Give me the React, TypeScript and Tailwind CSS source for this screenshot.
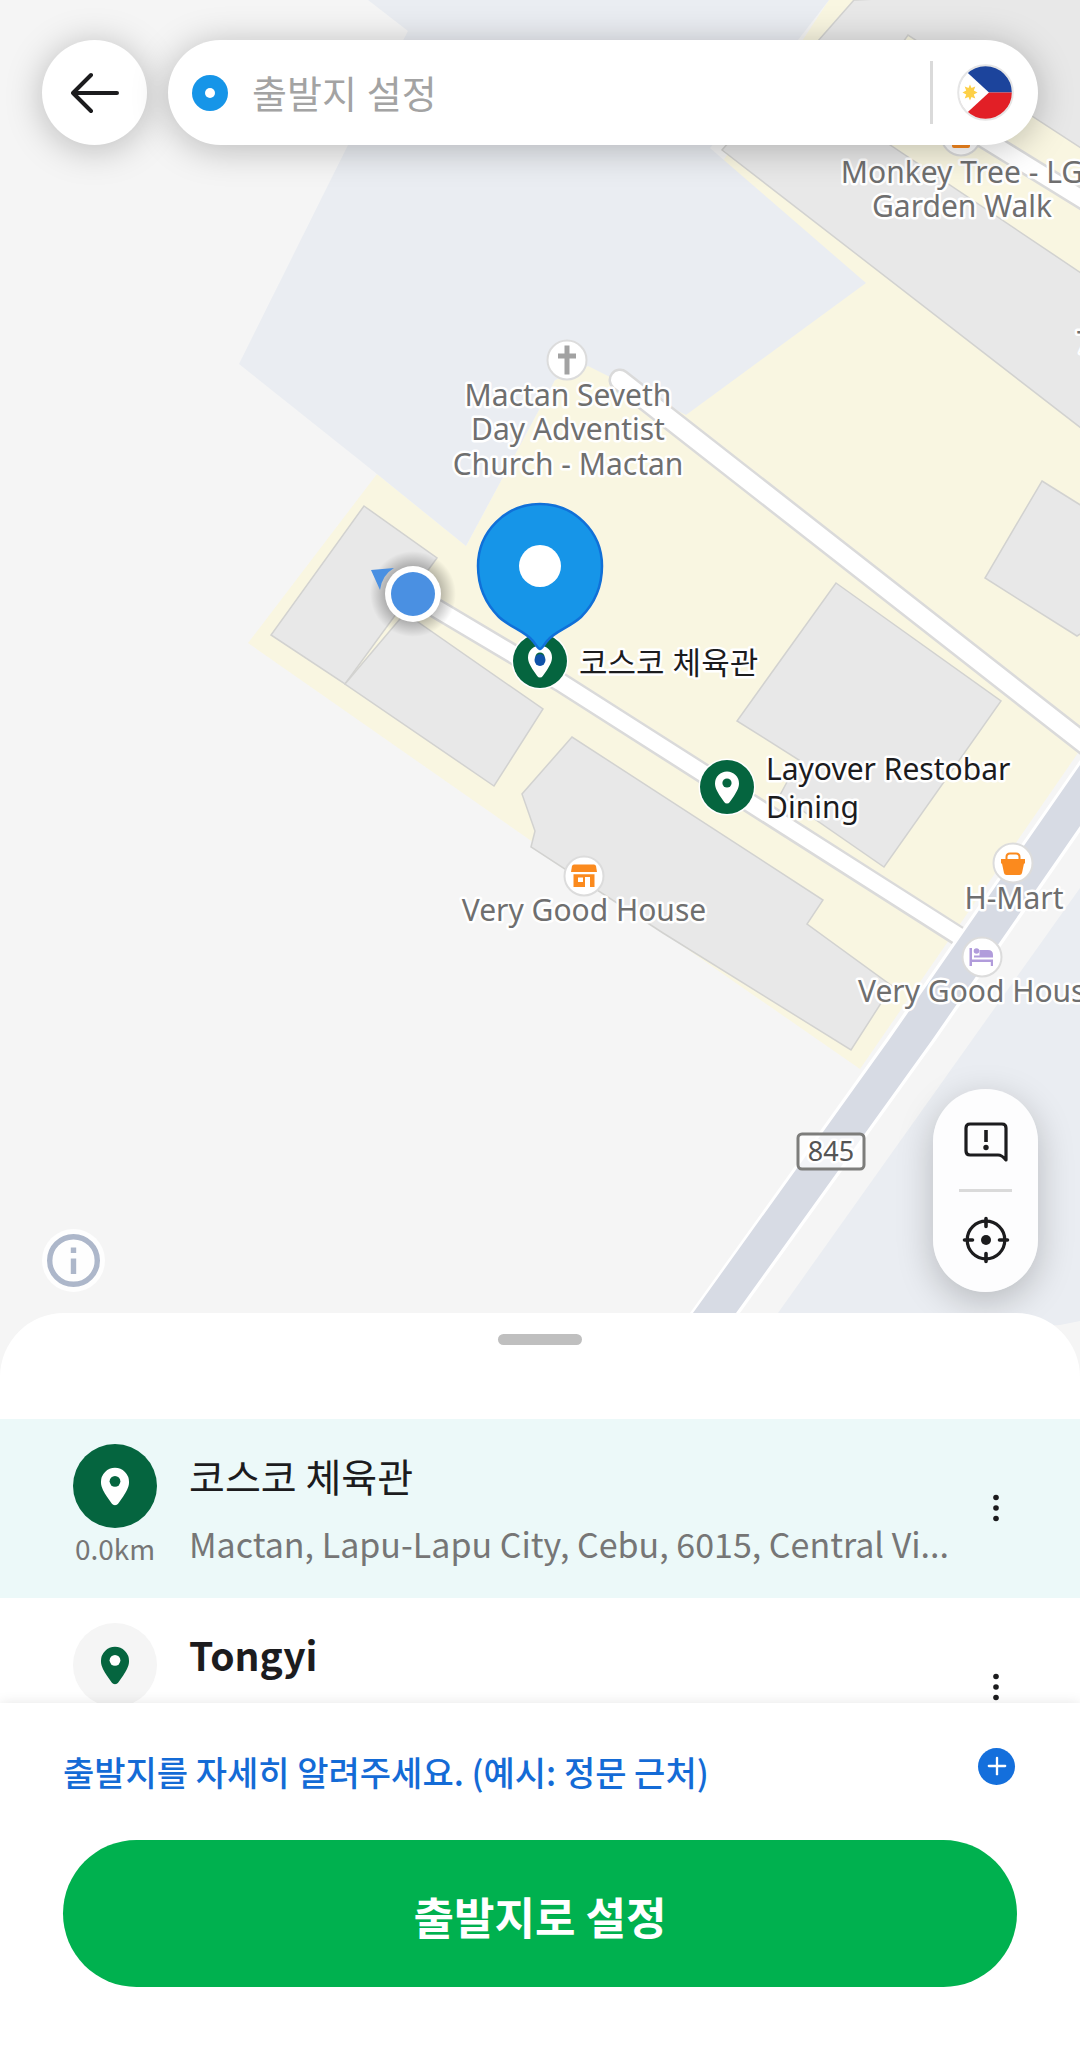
import { Plus } from "lucide-react";
import clsx from "clsx";

const places = [
  {
    name: "코스코 체육관",
    address: "Mactan, Lapu-Lapu City, Cebu, 6015, Central Vi...",
    distance: "0.0km",
    selected: true,
  },
  { name: "Tongyi", selected: false },
];

const buildings = [
  "364,506 437,558 345,684 271,635",
  "345,684 405,613 543,709 494,786",
  "572,737 522,794 535,831 531,847 663,933 851,1050 892,986 807,924 823,900",
  "836,583 1001,701 884,867 780,795 799,760 737,721",
  "1042,481 1090,511 1090,628 1077,636 985,578",
  "854,0 1090,-10 1090,154 908,35 850,118 1090,279 1090,435 722,150",
];

function PinShape({ className, hole }: { className?: string; hole: string }) {
  return (
    <g className={className}>
      <path d="M0-15.5A12 12 0 0 1 12-3.5C12 1.5 9 5.5 7 9L2.8 15A3.3 3.3 0 0 1-2.8 15L-7 9C-9 5.5-12 1.5-12-3.5A12 12 0 0 1 0-15.5Z" />
      <circle cy="-4" r="4.6" className={hole} />
    </g>
  );
}

function PoiBadge({ x, y, children }: { x: number; y: number; children: React.ReactNode }) {
  return (
    <g transform={`translate(${x} ${y})`}>
      <circle r="19.5" className="fill-white stroke-[#dcdcdc] stroke-2" />
      {children}
    </g>
  );
}

function GreenPoi({ x, y }: { x: number; y: number }) {
  return (
    <g transform={`translate(${x} ${y})`}>
      <circle r="28.5" className="fill-white" />
      <circle r="27" className="fill-[#05653f]" />
      <PinShape className="fill-white" hole="fill-[#05653f]" />
    </g>
  );
}

function MapCanvas() {
  return (
    <svg
      viewBox="0 0 1080 1377"
      preserveAspectRatio="xMidYMin slice"
      className="absolute inset-0 h-full w-full"
      role="img"
      aria-label="지도"
    >
      <defs>
        <radialGradient id="dot-shadow">
          <stop offset="0.6" stopColor="#000" stopOpacity="0.28" />
          <stop offset="1" stopColor="#000" stopOpacity="0" />
        </radialGradient>
      </defs>

      {/* land */}
      <rect width="1080" height="1377" className="fill-[#f5f5f5]" />
      <polygon
        points="829,0 1080,0 1080,750 860,1069 530,840 248,643 377,474 466,546 555,380 588,366"
        className="fill-[#f9f6e1]"
      />
      <polygon
        points="368,0 408,31 348,145 239,364 377,474 466,546 555,380 588,366 612,378 686,415 866,283 710,148 798,40 829,0"
        className="fill-[#eaedf2]"
      />
      <polygon points="1080,888 972,1040 778,1313 765,1345 1060,1325 1080,1321" className="fill-[#eaedf2]" />
      {buildings.map((points) => (
        <polygon key={points} points={points} className="fill-[#e8e8e8] stroke-[#d2d2d0]" strokeWidth="1.5" />
      ))}

      {/* roads */}
      <g fill="none" strokeLinejoin="round">
        <g className="stroke-[#dadada]">
          <path d="M620 380 1090 748" strokeWidth="23" strokeLinecap="round" />
          <path d="M412 594 560 682 960 937" strokeWidth="21" />
          <path d="M920 99 1090 204" strokeWidth="21" />
        </g>
        <g className="stroke-white">
          <path d="M620 380 1090 748" strokeWidth="18" strokeLinecap="round" />
          <path d="M412 594 560 682 962 938" strokeWidth="16" />
          <path d="M920 99 1090 204" strokeWidth="16" />
        </g>
      </g>
      <polygon points="645,1377 690,1313 885,1040 1080,760 1080,832 936,1040 740,1313 695,1377" className="fill-white" />
      <polygon points="649,1377 693,1313 889,1040 1080,765 1080,826 932,1040 736,1313 691,1377" className="fill-[#d7dbe4]" />

      {/* places */}
      <PoiBadge x={961} y={136}>
        <rect x="-9" y="-4" width="18" height="16" rx="2" className="fill-[#fb8a1e]" />
      </PoiBadge>
      <PoiBadge x={567} y={360}>
        <path d="M-2.5-14.5h5v8h6.5v5h-6.5v16h-5v-16H-9v-5h6.5z" className="fill-[#a2a2a2]" />
      </PoiBadge>
      <PoiBadge x={584} y={876}>
        <g className="fill-[#fb8a1e]">
          <path d="M-10-11.5h20q1.5 0 2 1.5l1 6h-26l1-6q.5-1.5 2-1.5z" />
          <path fillRule="evenodd" d="M-10.5-1.8h21V11H6V1H1V11h-11.500zM-6 1.500v4.500h5v-4.500z" />
        </g>
      </PoiBadge>
      <PoiBadge x={1013} y={863}>
        <path d="M-6.500-2v-4q0-3.500 3.500-3.500h6q3.500 0 3.500 3.500v4" fill="none" className="stroke-[#fb8a1e]" strokeWidth="2" />
        <path d="M-12-4h24v4.500h-1l-2 9.500q-.4 2-2.500 2h-13q-2.100 0-2.500-2l-2-9.500H-12z" className="fill-[#fb8a1e]" />
      </PoiBadge>
      <PoiBadge x={982} y={957}>
        <g className="fill-[#b19cdb]">
          <path d="M-12.500-9h2.500V2.500h21V9H8.800V5H-10v4h-2.500z" />
          <circle cx="-5.500" cy="-6" r="2.800" />
          <path d="M-8-1.500h5.500V-7H6q5 0 5 5v2.500H-8z" />
        </g>
      </PoiBadge>

      {/* route shield */}
      <rect x="798" y="1134" width="66" height="35" rx="4" className="fill-white/70 stroke-[#7d7d7b]" strokeWidth="3" />

      <g
        className="fill-[#6f6f6f] stroke-white text-[30px] [paint-order:stroke]"
        strokeWidth="5"
        strokeLinejoin="round"
        textAnchor="middle"
      >
        <text x="962" y="183">Monkey Tree - LG</text>
        <text x="962" y="217">Garden Walk</text>
        <text x="568" y="406">Mactan Seveth</text>
        <text x="568" y="440">Day Adventist</text>
        <text x="568" y="475">Church - Mactan</text>
        <text x="584" y="921">Very Good House</text>
        <text x="1014" y="909">H-Mart</text>
        <text x="858" y="1002" textAnchor="start">Very Good House</text>
        <text x="1076" y="353" textAnchor="start">7</text>
        <text x="831" y="1161" className="fill-[#555] text-[27px]">845</text>
      </g>

      <GreenPoi x={540} y={661} />
      <GreenPoi x={727} y={787} />
      <g
        className="fill-[#1c1c1e] stroke-white text-[30px] [paint-order:stroke]"
        strokeWidth="5"
        strokeLinejoin="round"
      >
        <text x="579" y="674" className="text-[31px]">코스코 체육관</text>
        <text x="766" y="780">Layover Restobar</text>
        <text x="766" y="818">Dining</text>
      </g>

      {/* current location */}
      <circle cx="413" cy="594" r="43" fill="url(#dot-shadow)" />
      <path d="M371 570 394 568Q382 575 380 590Z" className="fill-[#4a90e2]" />
      <circle cx="413" cy="594" r="28" className="fill-white" />
      <circle cx="413" cy="594" r="22" className="fill-[#4a90e2]" />

      {/* pickup marker */}
      <ellipse cx="540" cy="660" rx="5.5" ry="6" className="fill-[#0f52a8]" />
      <path
        d="M540 504A62 62 0 0 1 602 566C602 587 594 604 581 617C570 627 556 631 548 640C545 643 542 649 540 649C538 649 535 643 532 640C524 631 510 627 499 617C486 604 478 587 478 566A62 62 0 0 1 540 504Z"
        className="fill-[#1695e8] stroke-[#1070d8]"
        strokeWidth="2.5"
      />
      <circle cx="540" cy="566" r="21" className="fill-white" />
    </svg>
  );
}

function PhilippinesFlag() {
  return (
    <svg viewBox="0 0 57 57" className="size-[57px]" aria-hidden="true">
      <clipPath id="flag-clip">
        <circle cx="28.5" cy="28.5" r="27" />
      </clipPath>
      <g clipPath="url(#flag-clip)">
        <rect width="57" height="28.5" className="fill-[#1c449c]" />
        <rect y="28.5" width="57" height="28.5" className="fill-[#e21f26]" />
        <path d="M0-1 32 28.5 0 58Z" className="fill-white" />
        <path
          d="M13 20.5l1.5 3.6 3.8-1.5-1.5 3.8 3.7 2.1-3.7 2.1 1.5 3.8-3.8-1.500-1.500 3.700-1.500-3.700-3.800 1.500 1.500-3.800-3.700-2.100 3.700-2.100-1.500-3.800 3.800 1.500z"
          className="fill-[#fdd047]"
        />
      </g>
      <circle cx="28.5" cy="28.5" r="27.3" fill="none" className="stroke-[#e6e6e6]" strokeWidth="2" />
    </svg>
  );
}

function SearchHeader() {
  return (
    <header className="relative flex gap-[21px] px-[42px] pt-10">
      <button
        type="button"
        aria-label="뒤로"
        className="flex size-[105px] shrink-0 items-center justify-center rounded-full bg-white shadow-[0_4px_36px_rgba(0,0,0,0.25)]"
      >
        <svg
          viewBox="0 0 48 42"
          fill="none"
          className="h-[42px] w-12 stroke-[#1c1c1e]"
          strokeWidth="4"
          strokeLinecap="round"
          strokeLinejoin="round"
        >
          <path d="M20 3 2 21 20 39M2 21H46" />
        </svg>
      </button>
      <div className="flex h-[105px] min-w-0 flex-1 items-center rounded-full bg-white px-6 shadow-[0_4px_36px_rgba(0,0,0,0.25)]">
        <span className="flex size-9 shrink-0 items-center justify-center rounded-full bg-[#1695e8]">
          <span className="size-[10px] rounded-full bg-white" />
        </span>
        <input
          type="text"
          aria-label="출발지 설정"
          placeholder="출발지 설정"
          className="ml-6 h-full min-w-0 flex-1 bg-transparent text-[38px] outline-none placeholder:text-[#a3a3a3]"
        />
        <span className="h-[63px] w-[3px] bg-[#dadada]" />
        <button type="button" aria-label="국가" className="ml-6 shrink-0">
          <PhilippinesFlag />
        </button>
      </div>
    </header>
  );
}

function MapControls() {
  return (
    <div className="relative flex items-end justify-between px-[42px] pb-[85px]">
      <button type="button" aria-label="정보" className="rounded-full">
        <svg viewBox="0 0 63 63" className="size-[63px]">
          <circle cx="31.5" cy="31.5" r="31.5" className="fill-white/90" />
          <circle cx="31.5" cy="31.5" r="23.8" fill="none" className="stroke-[#adb7ca]" strokeWidth="5.4" />
          <path d="M28.8 18.5h5.4v5.5h-5.4zM28.8 29.5h5.4v15.5h-5.4z" className="fill-[#adb7ca]" />
        </svg>
      </button>
      <div className="flex w-[105px] flex-col items-center rounded-full bg-white/90 shadow-[0_10px_36px_rgba(0,0,0,0.22)]">
        <button type="button" aria-label="신고" className="flex h-[100px] w-full items-center justify-center pt-2">
          <svg viewBox="0 0 44 42" fill="none" className="h-[42px] w-11 stroke-[#1c1c1e]" strokeWidth="3.2">
            <path d="M6 2H38Q42 2 42 6V38Q38 33 34 33H6Q2 33 2 29V6Q2 2 6 2Z" strokeLinejoin="round" />
            <path d="M22 8V20" strokeWidth="3.6" />
            <circle cx="22" cy="25.5" r="2.7" stroke="none" className="fill-[#1c1c1e]" />
          </svg>
        </button>
        <span className="h-[3px] w-[53px] bg-[#dadada]" />
        <button type="button" aria-label="현재 위치" className="flex h-[100px] w-full items-center justify-center pb-1">
          <svg viewBox="0 0 48 48" fill="none" className="size-12 stroke-[#1c1c1e]" strokeWidth="3.2" strokeLinecap="round">
            <circle cx="24" cy="24" r="18.8" />
            <path d="M24 2.500V10.500M24 37.500V45.500M2.500 24H10.500M37.500 24H45.500" strokeWidth="3.6" />
            <circle cx="24" cy="24" r="5" stroke="none" className="fill-[#1c1c1e]" />
          </svg>
        </button>
      </div>
    </div>
  );
}

function PlaceRow({ place }: { place: (typeof places)[number] }) {
  return (
    <li className={clsx("flex h-[179px] pr-[63px] pl-[73px]", place.selected && "bg-[#ecf9f9]")}>
      <div className="flex w-[84px] shrink-0 flex-col items-center pt-[25px]">
        <svg viewBox="-42 -42 84 84" className="size-[84px]" aria-hidden="true">
          <circle r="42" className={place.selected ? "fill-[#05653f]" : "fill-[#f5f5f5]"} />
          <g transform="scale(1.17)">
            <PinShape
              className={place.selected ? "fill-white" : "fill-[#05653f]"}
              hole={place.selected ? "fill-[#05653f]" : "fill-white"}
            />
          </g>
        </svg>
        {place.distance && (
          <span className="text-[28px] leading-10 whitespace-nowrap text-[#767676]">{place.distance}</span>
        )}
      </div>
      <div className="ml-8 min-w-0 flex-1 pt-7">
        <p className={clsx("text-[39px] leading-[56px] text-[#1c1c1e]", !place.selected && "font-bold")}>
          {place.name}
        </p>
        {place.address && (
          <p className="mt-[15px] text-[34px] leading-[52px] whitespace-nowrap text-[#767676]">{place.address}</p>
        )}
      </div>
      <button type="button" aria-label="더보기" className="flex w-[42px] shrink-0 items-center justify-center pb-[2px]">
        <svg viewBox="0 0 6 28" className="h-7 w-[6px] fill-[#1c1c1e]">
          <circle cx="3" cy="3.5" r="2.8" />
          <circle cx="3" cy="14" r="2.8" />
          <circle cx="3" cy="24.5" r="2.8" />
        </svg>
      </button>
    </li>
  );
}

export default function App() {
  return (
    <main className="flex min-h-screen flex-col overflow-hidden bg-white font-['Noto_Sans','Noto_Sans_CJK_KR',sans-serif]">
      <section className="relative flex flex-1 flex-col justify-between overflow-hidden">
        <MapCanvas />
        <SearchHeader />
        <MapControls />
      </section>

      <section className="relative -mt-16 shrink-0 rounded-t-[64px] bg-white font-['Noto_Sans_CJK_KR',sans-serif]">
        <div className="flex h-[106px] justify-center pt-[21px]">
          <span className="h-[11px] w-[84px] rounded-full bg-[#bfbfbf]" />
        </div>
        <ul className="h-[284px] overflow-hidden">
          {places.map((place) => (
            <PlaceRow key={place.name} place={place} />
          ))}
        </ul>

        <footer className="relative bg-white px-[63px] pb-[61px] shadow-[0_0_12px_rgba(0,0,0,0.1)]">
          <button type="button" className="flex h-[137px] w-full items-center justify-between text-left text-[#146bd6]">
            <span className="text-[34px] font-medium">출발지를 자세히 알려주세요. (예시: 정문 근처)</span>
            <span className="mr-[2px] mb-[11px] flex size-[37px] items-center justify-center rounded-full bg-[#146fdc] text-white">
              <Plus className="size-7" strokeWidth={2} />
            </span>
          </button>
          <button
            type="button"
            className="h-[147px] w-full rounded-full bg-[#00b14f] pt-1 text-[44px] font-bold text-white"
          >
            출발지로 설정
          </button>
        </footer>
      </section>
    </main>
  );
}
